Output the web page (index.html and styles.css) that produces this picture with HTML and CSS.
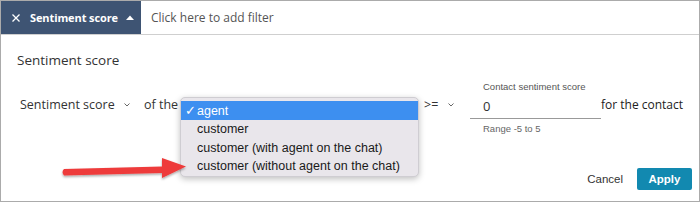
FILE: index.html
```html
<!DOCTYPE html>
<html>
<head>
<meta charset="utf-8">
<link rel="stylesheet" href="styles.css">
</head>
<body>
<div class="frame">
  <div class="topbar">
    <div class="tab">
      <svg class="tab-x" width="8" height="8" viewBox="0 0 8 8"><path d="M0.5 0.5 L7.5 7.5 M7.5 0.5 L0.5 7.5" stroke="#fff" stroke-width="1.3"/></svg>
      <span class="tab-label">Sentiment score</span>
      <svg class="tab-caret" width="8" height="5" viewBox="0 0 8 5"><path d="M0 5 L4 0.5 L8 5 Z" fill="#fff"/></svg>
    </div>
    <div class="placeholder">Click here to add filter</div>
  </div>
  <div class="panel">
    <div class="heading">Sentiment score</div>
    <div class="row">
      <div class="sel sel-metric">Sentiment score<svg class="chev" width="6" height="4" viewBox="0 0 6 4"><path d="M0.5 0.5 L3 3 L5.5 0.5" fill="none" stroke="#666" stroke-width="1"/></svg></div>
      <div class="ofthe">of the</div>
      <div class="sel-party"></div>
      <div class="sel sel-op">&gt;=<svg class="chev" width="6" height="4" viewBox="0 0 6 4"><path d="M0.5 0.5 L3 3 L5.5 0.5" fill="none" stroke="#666" stroke-width="1"/></svg></div>
      <div class="field">
        <div class="field-label">Contact sentiment score</div>
        <div class="field-value">0</div>
        <div class="field-hint">Range -5 to 5</div>
      </div>
      <div class="tail">for the contact</div>
    </div>
    <div class="footer">
      <span class="cancel">Cancel</span>
      <span class="apply">Apply</span>
    </div>
  </div>
  <div class="menu">
    <div class="opt selected"><span class="check">✓</span>agent</div>
    <div class="opt">customer</div>
    <div class="opt">customer (with agent on the chat)</div>
    <div class="opt">customer (without agent on the chat)</div>
  </div>
  <svg class="arrow" width="140" height="30" viewBox="0 0 140 30">
    <defs>
      <filter id="sh" x="-10%" y="-30%" width="120%" height="160%">
        <feDropShadow dx="0" dy="1.5" stdDeviation="1.2" flood-color="#000" flood-opacity="0.35"/>
      </filter>
    </defs>
    <g filter="url(#sh)">
      <path d="M5 13 L103 10.5 L103 2 L127 10.5 L103 22 L103 17 L5 19.5 Q2 16.2 5 13 Z" fill="#ee3b3b"/>
    </g>
  </svg>
</div>
</body>
</html>
```
FILE: styles.css
```css
* { box-sizing: border-box; }
body { margin: 0; background: #fff; font-family: "Open Sans", "Liberation Sans", sans-serif; color: #222; }
.frame { position: relative; width: 700px; height: 202px; border: 1px solid #ababab; overflow: hidden; }
.topbar { display: flex; height: 34px; border-bottom: 1px solid #cfcfcf; }
.tab { width: 140px; flex-shrink: 0; background: #3e5473; color: #fff; display: flex; align-items: center; padding-left: 11px; }
.tab-x { margin-right: 10px; }
.tab-label { font-weight: 700; font-size: 11px; letter-spacing: -0.1px; white-space: nowrap; }
.tab-caret { margin-left: 8px; }
.placeholder { display: flex; align-items: center; padding-left: 10px; font-size: 12px; color: #555; }
.panel { padding: 0 16px; }
.heading { font-size: 13.5px; color: #333; margin-top: 16px; line-height: 18px; }
.row { display: flex; align-items: flex-start; margin-top: 26px; height: 20px; line-height: 20px; font-size: 12.5px; color: #333; white-space: nowrap; }
.row > div { flex-shrink: 0; }
.sel { display: flex; align-items: center; height: 20px; }
.chev { margin-left: 9px; }
.sel-metric { margin-left: 3px; width: 124px; }
.ofthe { width: 36px; }
.sel-party { width: 244px; }
.sel-op { width: 46px; }
.sel-op .chev { margin-left: 10px; }
.field { position: relative; width: 131px; height: 24px; border-bottom: 1px solid #999; padding-left: 13px; padding-top: 1px; }
.field-label { position: absolute; left: 13px; top: -14px; line-height: 12px; font-size: 9.5px; color: #555; font-family: "Liberation Sans", sans-serif; }
.field-value { font-size: 13px; line-height: 20px; }
.field-hint { position: absolute; left: 13px; top: 28px; line-height: 12px; font-size: 9.5px; color: #666; font-family: "Liberation Sans", sans-serif; }
.tail { font-size: 12px; color: #222; }
.footer { display: flex; justify-content: flex-end; align-items: center; gap: 14px; margin-top: 53px; margin-right: -9px; }
.cancel { font-size: 11.5px; color: #333; font-family: "Liberation Sans", sans-serif; }
.apply { background: #1289b0; color: #fff; font-weight: 700; font-size: 11.5px; font-family: "Liberation Sans", sans-serif; width: 55px; height: 22px; display: flex; align-items: center; justify-content: center; border-radius: 2px; }
.menu { position: absolute; left: 179px; top: 96px; width: 239px; height: 80px; background: #e9e6eb; border: 1px solid #cfcdd2; border-radius: 5px; box-shadow: 0 2px 6px rgba(0,0,0,0.25); padding-top: 3px; font-family: "Liberation Sans", sans-serif; font-size: 12.5px; color: #1a1a1a; }
.opt { height: 18.5px; line-height: 18.5px; padding-left: 16px; white-space: nowrap; }
.opt.selected { background: #3d8ff0; color: #fff; height: 19px; line-height: 19px; padding-left: 4px; }
.check { display: inline-block; width: 12px; font-size: 13px; }
.arrow { position: absolute; left: 58px; top: 155px; }
```
